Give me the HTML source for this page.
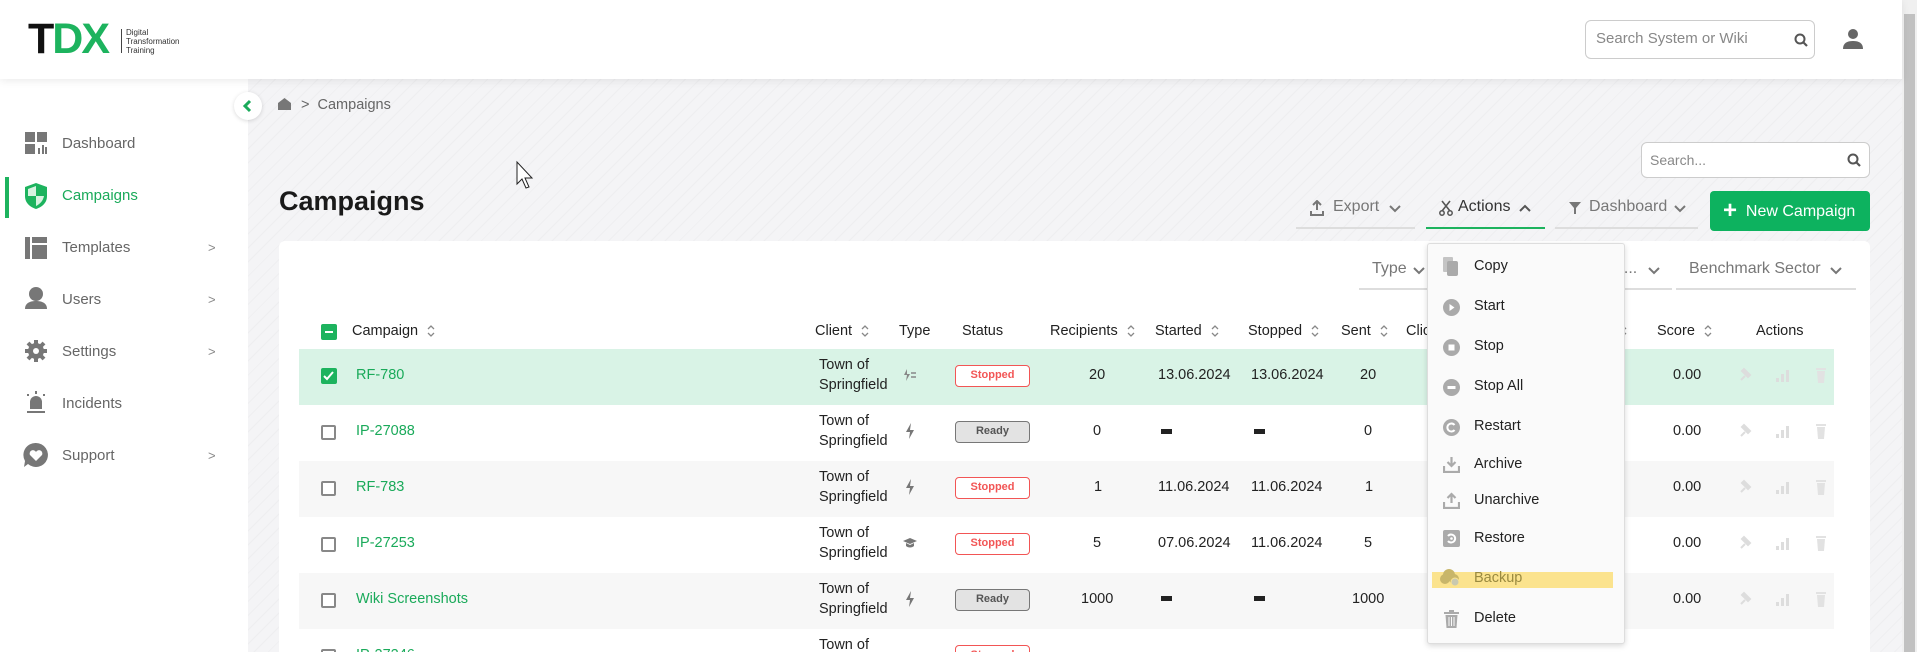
<!DOCTYPE html>
<html><head><meta charset="utf-8"><style>
*{box-sizing:border-box;margin:0;padding:0}
html{width:1917px;height:652px;overflow:hidden}
body{width:1917px;height:652px;overflow:hidden;font-family:"Liberation Sans",sans-serif;background:#f3f3f5;position:relative;color:#222}
.a{position:absolute;white-space:nowrap}
#clip{position:absolute;left:0;top:0;width:1917px;height:652px;overflow:hidden}
#hdr{left:0;top:0;width:1902px;height:79px;background:#fff;box-shadow:0 2px 8px rgba(0,0,0,.08);z-index:3}
#side{left:0;top:79px;width:248px;height:573px;background:#fff;z-index:2}
#main{left:248px;top:79px;width:1654px;height:573px;background:#f4f4f6 repeating-linear-gradient(135deg,rgba(0,0,0,0) 0 9px,rgba(0,0,0,.025) 9px 10px)}
#sb{left:1902px;top:0;width:15px;height:652px;background:#f0f0f0}
.nav{font-size:15px;color:#666;left:62px}
.chev{left:208px;color:#888;font-size:13px}
.card{left:279px;top:241px;width:1591px;height:411px;background:#fff;border-radius:6px 6px 0 0}
.th{font-size:14.5px;color:#222;top:323px}
.srt{display:inline-block;margin-left:8px;vertical-align:middle}
.row{left:299px;width:1535px;height:56px}
.cell{font-size:14.5px;color:#222}
.link{color:#1aaa5a;font-size:14.5px}
.cb{width:15px;height:15px;border:2px solid #888;border-radius:2px;background:#fff}
.badge{width:75px;height:22px;border-radius:4px;font-size:11px;font-weight:bold;text-align:center;line-height:19px}
.st{border:1.5px solid #f25555;color:#f25555;background:#fff}
.rd{border:1.5px solid #777;color:#555;background:#e3e3e3}
.dash{width:11px;height:5px;background:#222}
.mi{left:1474px;font-size:14.5px;color:#222}
.mic{left:1443px;width:17px;height:17px;border-radius:50%;background:#aaa}
.tab{font-size:16px;color:#777;top:198px}
.ul{height:2px;background:#ddd;top:227px}
</style></head><body><div id="clip">
<svg width="0" height="0" style="position:absolute"><defs>
<symbol id="srt" viewBox="0 0 10 16"><path d="M2 6l3-3 3 3M2 10l3 3 3-3" fill="none" stroke="#888" stroke-width="1.3"/></symbol>
<symbol id="acts" viewBox="0 0 90 18"><path d="M3 14l4-4M5 4l6 6M4 5l2-2 6 6-2 2z" stroke="#ddd" stroke-width="2" fill="#ddd"/><rect x="38" y="12" width="3" height="4" fill="#ddd"/><rect x="43" y="8" width="3" height="8" fill="#ddd"/><rect x="48" y="4" width="3" height="12" fill="#ddd"/><rect x="78" y="2" width="10" height="2" fill="#e2e2e2"/><path d="M79 5h8l-1 12h-6z" fill="#e2e2e2"/></symbol>
<symbol id="bolt" viewBox="0 0 10 16"><path d="M6 0L1 9h4l-1 7 5-9H5z" fill="#777"/></symbol>
<symbol id="ds" viewBox="0 0 14 14"><circle cx="6" cy="6" r="4.5" fill="none" stroke="#555" stroke-width="2"/><path d="M9 9l4 4" stroke="#555" stroke-width="2.2"/></symbol>
</defs></svg>
<div id="hdr" class="a">
 <div class="a" style="left:28px;top:17px;font-size:43px;font-weight:bold;letter-spacing:-2px;line-height:44px"><span style="color:#111">T</span><span style="color:#1db35e">DX</span></div>
 <div class="a" style="left:121px;top:29px;width:1px;height:24px;background:#444"></div>
 <div class="a" style="left:126px;top:28px;font-size:8px;line-height:9px;color:#333">Digital<br>Transformation<br>Training</div>
 <div class="a" style="left:1585px;top:20px;width:230px;height:39px;border:1px solid #ccc;border-radius:6px"></div>
 <div class="a" style="left:1596px;top:30px;font-size:15px;color:#888">Search System or Wiki</div>
 <svg class="a" style="left:1794px;top:33px" width="14" height="14"><use href="#ds"/></svg>
 <svg class="a" style="left:1842px;top:28px" width="22" height="22" viewBox="0 0 22 22"><circle cx="11" cy="6" r="5" fill="#666"/><path d="M1 21c0-6 4-8 10-8s10 2 10 8z" fill="#666"/></svg>
</div>
<div id="side" class="a">
 <div class="a" style="left:5px;top:98px;width:4px;height:41px;background:#1db35e"></div>
 <svg class="a" style="left:25px;top:53px" width="22" height="22"><rect x="0" y="0" width="10" height="10" fill="#777"/><rect x="12" y="0" width="10" height="10" fill="#777"/><rect x="0" y="12" width="10" height="10" fill="#777"/><rect x="13" y="16" width="2" height="6" fill="#777"/><rect x="17" y="13" width="2" height="9" fill="#777"/><rect x="20" y="15" width="2" height="7" fill="#777"/></svg>
 <div class="a nav" style="top:56px">Dashboard</div>
 <svg class="a" style="left:23px;top:103px" width="26" height="28" viewBox="0 0 26 28"><path d="M13 1l11 4v9c0 7-5 11-11 13C7 25 2 21 2 14V5z" fill="#1db35e"/><path d="M13 4v10H5V7z M13 14h8c-1 5-4 8-8 10z" fill="#d6f2e0"/></svg>
 <div class="a nav" style="top:108px;color:#1aaa5a">Campaigns</div>
 <svg class="a" style="left:25px;top:158px" width="22" height="22"><rect x="0" y="0" width="5" height="22" fill="#777"/><rect x="7" y="0" width="15" height="6" fill="#777"/><rect x="7" y="8" width="15" height="14" fill="#777"/></svg>
 <div class="a nav" style="top:160px">Templates</div><div class="a chev" style="top:161px">&gt;</div>
 <svg class="a" style="left:25px;top:208px" width="22" height="24"><circle cx="11" cy="7" r="7" fill="#777"/><path d="M0 22c0-6 5-8 11-8s11 2 11 8z" fill="#777"/></svg>
 <div class="a nav" style="top:212px">Users</div><div class="a chev" style="top:213px">&gt;</div>
 <svg class="a" style="left:25px;top:261px" width="22" height="22" viewBox="0 0 22 22"><circle cx="11" cy="11" r="8" fill="#777"/><g stroke="#777" stroke-width="4"><path d="M11 0v22M0 11h22M3 3l16 16M19 3L3 19"/></g><circle cx="11" cy="11" r="3" fill="#fff"/></svg>
 <div class="a nav" style="top:264px">Settings</div><div class="a chev" style="top:265px">&gt;</div>
 <svg class="a" style="left:25px;top:312px" width="22" height="22"><path d="M5 18v-7a6 6 0 0 1 12 0v7z" fill="#777"/><rect x="2" y="20" width="18" height="2" fill="#777"/><rect x="10" y="0" width="2" height="3" fill="#777"/><rect x="2" y="3" width="2" height="2" fill="#777"/><rect x="18" y="3" width="2" height="2" fill="#777"/></svg>
 <div class="a nav" style="top:316px">Incidents</div>
 <svg class="a" style="left:23px;top:363px" width="26" height="26"><path d="M13 1a12 12 0 1 1-8 21l-4 3 1-6A12 12 0 0 1 13 1z" fill="#777"/><path d="M13 19l-6-6a3 3 0 0 1 6-3 3 3 0 0 1 6 3z" fill="#fff"/></svg>
 <div class="a nav" style="top:368px">Support</div><div class="a chev" style="top:369px">&gt;</div>
</div>
<div id="main" class="a"></div>
<div id="sb" class="a"><div class="a" style="left:2px;top:14px;width:11px;height:638px;background:#c1c1c1"></div></div>
<div class="a" style="left:234px;top:92px;width:28px;height:28px;border-radius:50%;background:#fff;box-shadow:0 1px 4px rgba(0,0,0,.15);z-index:4"><svg width="28" height="28"><path d="M16 9l-5 5 5 5" fill="none" stroke="#1aaa5a" stroke-width="3"/></svg></div>
<svg class="a" style="left:278px;top:98px" width="13" height="12"><path d="M6.5 0L13 5v7H0V5z" fill="#777"/></svg>
<div class="a" style="left:301px;top:97px;font-size:14.5px;color:#666">&gt;&nbsp;&nbsp;Campaigns</div>
<div class="a" style="left:279px;top:186px;font-size:27px;font-weight:bold;color:#1a1a1a">Campaigns</div>
<svg class="a" style="left:515px;top:160px" width="20" height="30"><path d="M2 2v22l5-5 4 9 3-1-4-9h7z" fill="#fff" stroke="#222" stroke-width="1"/></svg>
<div class="a" style="left:1641px;top:142px;width:229px;height:36px;background:#fff;border:1px solid #ccc;border-radius:6px"></div>
<div class="a" style="left:1650px;top:152px;font-size:14px;color:#888">Search...</div>
<svg class="a" style="left:1847px;top:153px" width="14" height="14"><use href="#ds"/></svg>
<svg class="a" style="left:1309px;top:200px" width="16" height="16"><path d="M8 1v9M4 5l4-4 4 4M2 11v4h12v-4" fill="none" stroke="#777" stroke-width="2"/></svg>
<div class="a tab" style="left:1333px">Export</div>
<svg class="a" style="left:1389px;top:205px" width="12" height="8"><path d="M1 1l5 5 5-5" fill="none" stroke="#777" stroke-width="2"/></svg>
<div class="a ul" style="left:1296px;width:119px"></div>
<svg class="a" style="left:1439px;top:200px" width="14" height="16"><path d="M3 1l8 10M11 1L3 11" stroke="#555" stroke-width="1.6"/><circle cx="3" cy="13" r="2.2" fill="none" stroke="#555" stroke-width="1.5"/><circle cx="11" cy="13" r="2.2" fill="none" stroke="#555" stroke-width="1.5"/></svg>
<div class="a tab" style="left:1458px;color:#333">Actions</div>
<svg class="a" style="left:1519px;top:204px" width="12" height="8"><path d="M1 7l5-5 5 5" fill="none" stroke="#555" stroke-width="2"/></svg>
<div class="a ul" style="left:1426px;width:119px;background:#1db35e"></div>
<svg class="a" style="left:1569px;top:201px" width="12" height="14"><path d="M0 1h12L7 7v6H5V7z" fill="#777"/></svg>
<div class="a tab" style="left:1589px">Dashboard</div>
<svg class="a" style="left:1674px;top:205px" width="12" height="8"><path d="M1 1l5 5 5-5" fill="none" stroke="#777" stroke-width="2"/></svg>
<div class="a ul" style="left:1555px;width:143px"></div>
<div class="a" style="left:1710px;top:191px;width:160px;height:40px;background:#0db25f;border-radius:4px;color:#fff;font-size:16px;line-height:40px;padding-left:13px"><b style="font-size:24px;vertical-align:-2px">+</b>&nbsp; New Campaign</div>
<div class="a card"></div>
<div class="a" style="left:1372px;top:260px;font-size:16px;color:#777">Type</div>
<svg class="a" style="left:1413px;top:267px" width="12" height="8"><path d="M1 1l5 5 5-5" fill="none" stroke="#777" stroke-width="2"/></svg>
<div class="a" style="left:1359px;top:288px;width:70px;height:2px;background:#ddd"></div>
<div class="a" style="left:1615px;top:260px;font-size:16px;color:#777">o...</div>
<svg class="a" style="left:1648px;top:267px" width="12" height="8"><path d="M1 1l5 5 5-5" fill="none" stroke="#777" stroke-width="2"/></svg>
<div class="a" style="left:1560px;top:288px;width:112px;height:2px;background:#ddd"></div>
<div class="a" style="left:1689px;top:260px;font-size:16px;color:#777">Benchmark Sector</div>
<svg class="a" style="left:1830px;top:267px" width="12" height="8"><path d="M1 1l5 5 5-5" fill="none" stroke="#777" stroke-width="2"/></svg>
<div class="a" style="left:1676px;top:288px;width:180px;height:2px;background:#ddd"></div>
<div class="a" style="left:321px;top:324px;width:16px;height:16px;background:#1db35e;border-radius:2px"><div style="margin:7px 4px;width:8px;height:2px;background:#fff"></div></div>
<div class="a th" style="left:352px">Campaign<svg class="srt" width="10" height="16"><use href="#srt"/></svg></div>
<div class="a th" style="left:815px">Client<svg class="srt" width="10" height="16"><use href="#srt"/></svg></div>
<div class="a th" style="left:899px">Type</div>
<div class="a th" style="left:962px">Status</div>
<div class="a th" style="left:1050px">Recipients<svg class="srt" width="10" height="16"><use href="#srt"/></svg></div>
<div class="a th" style="left:1155px">Started<svg class="srt" width="10" height="16"><use href="#srt"/></svg></div>
<div class="a th" style="left:1248px">Stopped<svg class="srt" width="10" height="16"><use href="#srt"/></svg></div>
<div class="a th" style="left:1341px">Sent<svg class="srt" width="10" height="16"><use href="#srt"/></svg></div>
<div class="a th" style="left:1406px">Clic</div>
<div class="a th" style="left:1610px"><svg class="srt" width="10" height="16"><use href="#srt"/></svg></div>
<div class="a th" style="left:1657px">Score<svg class="srt" width="10" height="16"><use href="#srt"/></svg></div>
<div class="a th" style="left:1756px">Actions</div>

<div class="a row" style="top:349px;background:#d9f3e6"></div>
<div class="a row" style="top:405px;background:#fff"></div>
<div class="a row" style="top:461px;background:#f7f7f7"></div>
<div class="a row" style="top:517px;background:#fff"></div>
<div class="a row" style="top:573px;background:#f7f7f7"></div>
<div class="a row" style="top:629px;background:#fff"></div>

<div class="a" style="left:321px;top:368px;width:16px;height:16px;background:#1db35e;border-radius:2px"><svg width="16" height="16"><path d="M3 8l3 3 6-7" fill="none" stroke="#fff" stroke-width="2"/></svg></div>
<div class="a cb" style="left:321px;top:425px"></div>
<div class="a cb" style="left:321px;top:481px"></div>
<div class="a cb" style="left:321px;top:537px"></div>
<div class="a cb" style="left:321px;top:593px"></div>
<div class="a cb" style="left:321px;top:649px"></div>

<div class="a link" style="left:356px;top:367px">RF-780</div>
<div class="a link" style="left:356px;top:423px">IP-27088</div>
<div class="a link" style="left:356px;top:479px">RF-783</div>
<div class="a link" style="left:356px;top:535px">IP-27253</div>
<div class="a link" style="left:356px;top:591px">Wiki Screenshots</div>
<div class="a link" style="left:356px;top:647px">IP-27246</div>

<div class="a cell" style="left:819px;top:355px;line-height:20px">Town of<br>Springfield</div>
<div class="a cell" style="left:819px;top:411px;line-height:20px">Town of<br>Springfield</div>
<div class="a cell" style="left:819px;top:467px;line-height:20px">Town of<br>Springfield</div>
<div class="a cell" style="left:819px;top:523px;line-height:20px">Town of<br>Springfield</div>
<div class="a cell" style="left:819px;top:579px;line-height:20px">Town of<br>Springfield</div>
<div class="a cell" style="left:819px;top:635px;line-height:20px">Town of<br>Springfield</div>

<svg class="a" style="left:903px;top:369px" width="14" height="12"><path d="M4 0L1 6h3l-1 6 4-7H4z" fill="#888"/><path d="M8 4h5M8 8h5" stroke="#888" stroke-width="1.5"/></svg>
<svg class="a" style="left:905px;top:423px" width="10" height="16"><use href="#bolt"/></svg>
<svg class="a" style="left:905px;top:479px" width="10" height="16"><use href="#bolt"/></svg>
<svg class="a" style="left:903px;top:537px" width="14" height="12"><path d="M7 1l7 3-7 3-7-3z M3 6v3c2 2 6 2 8 0V6L7 8z" fill="#777"/></svg>
<svg class="a" style="left:905px;top:591px" width="10" height="16"><use href="#bolt"/></svg>

<div class="a badge st" style="left:955px;top:365px">Stopped</div>
<div class="a badge rd" style="left:955px;top:421px">Ready</div>
<div class="a badge st" style="left:955px;top:477px">Stopped</div>
<div class="a badge st" style="left:955px;top:533px">Stopped</div>
<div class="a badge rd" style="left:955px;top:589px">Ready</div>
<div class="a badge st" style="left:955px;top:645px">Stopped</div>

<div class="a cell" style="left:1089px;top:367px">20</div>
<div class="a cell" style="left:1093px;top:423px">0</div>
<div class="a cell" style="left:1094px;top:479px">1</div>
<div class="a cell" style="left:1093px;top:535px">5</div>
<div class="a cell" style="left:1081px;top:591px">1000</div>
<div class="a cell" style="left:1158px;top:367px">13.06.2024</div>
<div class="a cell" style="left:1251px;top:367px">13.06.2024</div>
<div class="a dash" style="left:1161px;top:429px"></div><div class="a dash" style="left:1254px;top:429px"></div>
<div class="a cell" style="left:1158px;top:479px">11.06.2024</div>
<div class="a cell" style="left:1251px;top:479px">11.06.2024</div>
<div class="a cell" style="left:1158px;top:535px">07.06.2024</div>
<div class="a cell" style="left:1251px;top:535px">11.06.2024</div>
<div class="a dash" style="left:1161px;top:596px"></div><div class="a dash" style="left:1254px;top:596px"></div>
<div class="a cell" style="left:1360px;top:367px">20</div>
<div class="a cell" style="left:1364px;top:423px">0</div>
<div class="a cell" style="left:1365px;top:479px">1</div>
<div class="a cell" style="left:1364px;top:535px">5</div>
<div class="a cell" style="left:1352px;top:591px">1000</div>

<div class="a cell" style="left:1673px;top:367px">0.00</div>
<div class="a cell" style="left:1673px;top:423px">0.00</div>
<div class="a cell" style="left:1673px;top:479px">0.00</div>
<div class="a cell" style="left:1673px;top:535px">0.00</div>
<div class="a cell" style="left:1673px;top:591px">0.00</div>
<svg class="a" style="left:1738px;top:366px" width="90" height="18"><use href="#acts"/></svg>
<svg class="a" style="left:1738px;top:422px" width="90" height="18"><use href="#acts"/></svg>
<svg class="a" style="left:1738px;top:478px" width="90" height="18"><use href="#acts"/></svg>
<svg class="a" style="left:1738px;top:534px" width="90" height="18"><use href="#acts"/></svg>
<svg class="a" style="left:1738px;top:590px" width="90" height="18"><use href="#acts"/></svg>

<div class="a" style="left:1427px;top:243px;width:198px;height:401px;background:#fafafa;border:1px solid #ddd;border-radius:3px;box-shadow:0 2px 6px rgba(0,0,0,.15)"></div>
<div class="a" style="left:1432px;top:572px;width:181px;height:16px;background:#fbe38e"></div>
<svg class="a" style="left:1443px;top:257px" width="16" height="20"><rect x="0" y="0" width="10" height="15" rx="1" fill="#c4c4c4"/><rect x="4" y="4" width="11" height="15" rx="2" fill="#aaa"/></svg>
<svg class="a" style="left:1443px;top:299px" width="17" height="17"><circle cx="8.5" cy="8.5" r="8.5" fill="#aaa"/><path d="M6.5 5v7l5-3.5z" fill="#fff"/></svg>
<svg class="a" style="left:1443px;top:339px" width="17" height="17"><circle cx="8.5" cy="8.5" r="8.5" fill="#aaa"/><rect x="5.5" y="5.5" width="6" height="6" fill="#fff"/></svg>
<svg class="a" style="left:1443px;top:379px" width="17" height="17"><circle cx="8.5" cy="8.5" r="8.5" fill="#aaa"/><rect x="4.5" y="7" width="8" height="3" fill="#fff"/></svg>
<svg class="a" style="left:1443px;top:419px" width="17" height="17"><circle cx="8.5" cy="8.5" r="8.5" fill="#aaa"/><path d="M11.5 6a4 4 0 1 0 0 5" fill="none" stroke="#fff" stroke-width="2"/></svg>
<svg class="a" style="left:1443px;top:456px" width="17" height="17"><path d="M8.5 1v9M4.5 6l4 4 4-4M1 10v6h15v-6" fill="none" stroke="#aaa" stroke-width="2.2"/></svg>
<svg class="a" style="left:1443px;top:492px" width="17" height="17"><path d="M8.5 11V2M4.5 6l4-4 4 4M1 10v6h15v-6" fill="none" stroke="#aaa" stroke-width="2.2"/></svg>
<svg class="a" style="left:1443px;top:530px" width="17" height="17"><rect width="17" height="17" rx="2" fill="#aaa"/><path d="M5 6a4 4 0 1 1 0 5" fill="none" stroke="#fff" stroke-width="2"/><circle cx="8.5" cy="8.5" r="1.3" fill="#fff"/></svg>
<svg class="a" style="left:1440px;top:568px" width="22" height="20"><circle cx="9" cy="7" r="6" fill="#c8b66a"/><circle cx="5" cy="11" r="5" fill="#c8b66a"/><circle cx="14" cy="11" r="5" fill="#c8b66a"/><circle cx="15" cy="14" r="4" fill="#c9c9b0" stroke="#fbe38e" stroke-width="1"/></svg>
<svg class="a" style="left:1444px;top:610px" width="15" height="18"><rect x="0" y="2" width="15" height="2" fill="#aaa"/><rect x="5" y="0" width="5" height="2" fill="#aaa"/><path d="M1.5 5h12l-1 13h-10z" fill="#aaa"/><path d="M5 7v9M7.5 7v9M10 7v9" stroke="#fafafa" stroke-width="1"/></svg>
<div class="a mi" style="top:258px">Copy</div>
<div class="a mi" style="top:298px">Start</div>
<div class="a mi" style="top:338px">Stop</div>
<div class="a mi" style="top:378px">Stop All</div>
<div class="a mi" style="top:418px">Restart</div>
<div class="a mi" style="top:456px">Archive</div>
<div class="a mi" style="top:492px">Unarchive</div>
<div class="a mi" style="top:530px">Restore</div>
<div class="a mi" style="top:570px;color:#9a8a40">Backup</div>
<div class="a mi" style="top:610px">Delete</div>
</div></body></html>
